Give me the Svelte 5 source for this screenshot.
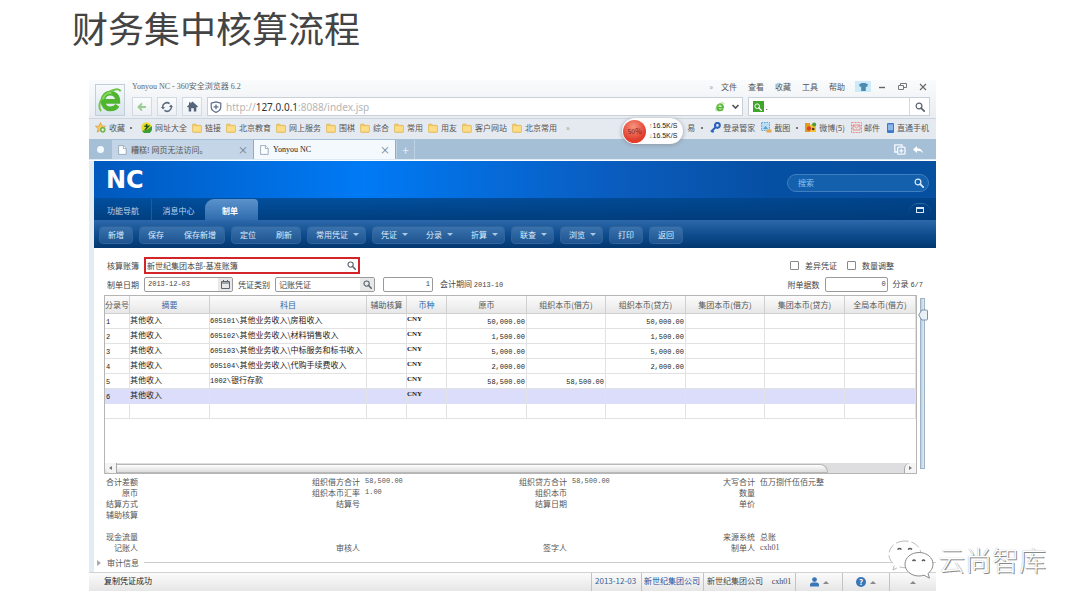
<script>
  const menus = ['文件', '查看', '收藏', '工具', '帮助'];
  const folders = ['链接', '北京教育', '网上服务', '围棋', '综合', '常用', '用友', '客户网站', '北京常用'];
  const toolGroups = [
    [{ t: '新增' }],
    [{ t: '保存' }, { t: '保存新增' }],
    [{ t: '定位' }, { t: '刷新' }],
    [{ t: '常用凭证', d: true }],
    [{ t: '凭证', d: true }, { t: '分录', d: true }, { t: '折算', d: true }],
    [{ t: '联查', d: true }],
    [{ t: '浏览', d: true }],
    [{ t: '打印' }],
    [{ t: '返回' }]
  ];
  const columns = [
    { t: '分录号', w: 25 },
    { t: '摘要', w: 80, key: true },
    { t: '科目', w: 157, key: true },
    { t: '辅助核算', w: 40 },
    { t: '币种', w: 40, key: true },
    { t: '原币', w: 80 },
    { t: '组织本币(借方)', w: 79 },
    { t: '组织本币(贷方)', w: 80 },
    { t: '集团本币(借方)', w: 79 },
    { t: '集团本币(贷方)', w: 80 },
    { t: '全局本币(借方)', w: 71 }
  ];
  const rows = [
    { code: '605101\\', name: '其他业务收入\\房租收入', amount: '50,000.00', debit: '', credit: '50,000.00' },
    { code: '605102\\', name: '其他业务收入\\材料销售收入', amount: '1,500.00', debit: '', credit: '1,500.00' },
    { code: '605103\\', name: '其他业务收入\\中标服务和标书收入', amount: '5,000.00', debit: '', credit: '5,000.00' },
    { code: '605104\\', name: '其他业务收入\\代购手续费收入', amount: '2,000.00', debit: '', credit: '2,000.00' },
    { code: '1002\\', name: '银行存款', amount: '58,500.00', debit: '58,500.00', credit: '' },
    { code: '', name: '', amount: '', debit: '', credit: '', selected: true }
  ];
  const summary = [
    ['合计差额', '', '组织借方合计', '58,500.00', '组织贷方合计', '58,500.00', '大写合计', '伍万捌仟伍佰元整'],
    ['原币', '', '组织本币汇率', '1.00', '组织本币', '', '数量', ''],
    ['结算方式', '', '结算号', '', '结算日期', '', '单价', ''],
    ['辅助核算', '', '', '', '', '', '', ''],
    ['', '', '', '', '', '', '', ''],
    ['现金流量', '', '', '', '', '', '来源系统', '总账'],
    ['记账人', '', '审核人', '', '签字人', '', '制单人', 'cxh01']
  ];
  const isNumber = (v) => /^[\d,.]+$/.test(v);
</script>

{#snippet magnifier(color, size)}
  <svg width={size} height={size} viewBox="0 0 10 10" fill="none" stroke={color} aria-hidden="true">
    <circle cx="4" cy="4" r="2.9" stroke-width="1.2" />
    <path d="M6.2 6.2 9.2 9.2" stroke-width="1.7" stroke-linecap="round" />
  </svg>
{/snippet}

{#snippet page()}
  <svg width="9" height="10" viewBox="0 0 9 10" fill="#fdfeff" stroke="#8c9cae" stroke-width=".8" aria-hidden="true">
    <path d="M.6.6h5l2.6 2.8v6H.6z" /><path d="M5.4.8v2.8h2.7" />
  </svg>
{/snippet}

{#snippet folder()}
  <svg width="10" height="10" viewBox="0 0 10 10" aria-hidden="true">
    <path d="M.5 2q0-1 1-1h2.2l1 1.3h3.8q1 0 1 1V8.4q0 1-1 1h-7q-1 0-1-1z" fill="#f2c862" stroke="#dfb150" stroke-width=".6" />
    <path d="M1.1 3.2h7.8v5.4H1.1z" fill="#fbdc87" />
  </svg>
{/snippet}

{#snippet browserMark(size)}
  <svg width={size} height={size} viewBox="0 0 28 28" fill="none" aria-hidden="true">
    <path d="M7 15.5H22.5C22.5 9.7 18.8 6.6 14.3 6.6 9.7 6.6 6.4 10.3 6.4 15.2c0 5 3.4 8.4 8.2 8.4 3.4 0 5.8-1.4 7.4-3.8" stroke="#4fb52f" stroke-width="5" />
    <path d="M4.500 26C0 21 4 9 15 4.2 20 2 24 1.6 25.500 4.6" stroke="#6cc442" stroke-width="2" />
    <path d="M6.6 13.4C7.3 8.8 11 6 15.6 6.6" stroke="#86d95b" stroke-width="2" />
  </svg>
{/snippet}

<main>
  <h1>财务集中核算流程</h1>

  <div class="window">
    <header class="chrome">
      <div class="brand">{@render browserMark(26)}</div>
      <div class="chrome-main">
        <div class="titlebar">
          <span class="win-title">Yonyou NC - 360安全浏览器 6.2</span>
          <nav class="menus">
            <span class="faint">»</span>
            {#each menus as m}<button>{m}</button>{/each}
          </nav>
          <div class="win-buttons">
            <button class="skin" aria-label="皮肤">
              <svg width="9" height="8" viewBox="0 0 9 8"><path d="M0 1.5 2.8 0h3.4L9 1.5 8 4 6.8 3.4V8H2.2V3.4L1 4z" fill="#4b8bb0" /></svg>
            </button>
            <button aria-label="最小化"><svg width="8" height="8" viewBox="0 0 8 8"><path d="M1 4.5h6" stroke="#666" stroke-width="1.4" /></svg></button>
            <button aria-label="还原"><svg width="9" height="8" viewBox="0 0 9 8" fill="none" stroke="#777"><path d="M.5 2.5h5v4h-5zM2.5 2.5v-2h6v4h-3" /></svg></button>
            <button aria-label="关闭"><svg width="8" height="8" viewBox="0 0 8 8"><path d="m1 1 6 6M7 1 1 7" stroke="#666" stroke-width="1.1" /></svg></button>
          </div>
        </div>

        <div class="address-row">
          <button class="nav-btn" aria-label="后退">
            <svg width="10" height="10" viewBox="0 0 10 10" fill="none" stroke="#9bcb94" stroke-width="1.8"><path d="M9 5H1.8M5 1.5 1.5 5 5 8.5" /></svg>
          </button>
          <button class="nav-btn" aria-label="刷新">
            <svg width="12" height="12" viewBox="0 0 12 12" fill="none" stroke="#5c6a7e" stroke-width="1.5"><path d="M1.8 7A4.3 4.3 0 0 1 8.6 2.6M10.2 5a4.3 4.3 0 0 1-6.8 4.4" /><path d="M0 6h4L2 8.6zM8 6l2-2.6L12 6z" fill="#5c6a7e" stroke="none" /></svg>
          </button>
          <button class="nav-btn" aria-label="主页">
            <svg width="11" height="11" viewBox="0 0 11 11" fill="#56647a"><path d="M5.5.6 11 5.6 10 6.6 9.3 6v4.6H6.8V7.3H4.2v3.3H1.7V6l-.7.6-1-1L2 3.8V1.2h1.5v1.2z" /></svg>
          </button>
          <div class="address">
            <svg width="12" height="12" viewBox="0 0 12 12" fill="none" stroke="#5a6a86" stroke-width="1.2" aria-hidden="true"><path d="M6 .8 10.8 2.2v3.6C10.8 8.6 8.8 10.4 6 11.4 3.2 10.4 1.2 8.6 1.2 5.8V2.2zM6 3.4v4.8M3.6 5.8h4.8" /></svg>
            <span class="url">http://<b>127.0.0.1</b>:8088/index.jsp</span>
            {@render browserMark(10)}
            <svg class="caret" width="9" height="9" viewBox="0 0 9 9" fill="none" stroke="#555" stroke-width="1.7" aria-hidden="true"><path d="M1.5 3 4.5 6 7.5 3" /></svg>
          </div>
          <label class="web-search">
            <span class="engine">{@render magnifier('#ffffff', 8)}</span>
            <input aria-label="网页搜索" value="." />
            <button aria-label="搜索">{@render magnifier('#5b6470', 10)}</button>
          </label>
        </div>
      </div>
    </header>

    <nav class="bookmarks">
      <a href="#fav">
        <svg width="11" height="11" viewBox="0 0 11 11"><path d="M5.5.6 7 4l3.6.2L8 6.6l.8 3.6-3.3-1.9-3.3 1.9L3 6.6.4 4.2 4 4z" fill="#f7c861" stroke="#d99a35" stroke-width=".7" /><circle cx="7.8" cy="7.8" r="2.8" fill="#67b548" /><path d="M6.4 7.8h2.8M7.8 6.4v2.8" stroke="#fff" /></svg>收藏
      </a>
      <i class="dot"></i>
      <a class="sites" href="#sites">
        <svg width="11" height="11" viewBox="0 0 11 11"><circle cx="5.5" cy="5.5" r="5.2" fill="#e9dc28" /><path d="M1 8.8A5.2 5.2 0 0 0 10.6 4L6 8z" fill="#3a9d35" /><path d="M3.4 4.2h4.2L3.8 8M5.6 2v5.6" stroke="#255a24" stroke-width="1.4" fill="none" /></svg>网址大全
      </a>
      {#each folders as f}<a href="#folder">{@render folder()}{f}</a>{/each}
      <span class="faint more">»</span>
      <div class="plugins">
        <a href="#trade">易</a>
        <i class="dot"></i>
        <a href="#login">
          <svg width="11" height="11" viewBox="0 0 11 11"><circle cx="7.4" cy="3.4" r="2.4" fill="none" stroke="#2d62c0" stroke-width="2.2" /><path d="M5.8 5 1 9.8M2 8.6l1.6 1.6" stroke="#2d62c0" stroke-width="2" /></svg>登录管家
        </a>
        <a href="#shot">
          <svg width="11" height="11" viewBox="0 0 11 11"><rect x=".5" y=".5" width="8" height="8" fill="#b8dcf3" stroke="#5ea5d4" stroke-dasharray="1.5 1" /><path d="M2 7 4.5 4 7 7z" fill="#4f9fce" /><path d="M5.5 7.5h5v3h-5z" fill="#e8a751" /></svg>截图
        </a>
        <i class="dot"></i>
        <a href="#weibo">
          <svg width="12" height="11" viewBox="0 0 12 11"><path d="M0 1h5v9H0z" fill="#e59a26" /><path d="M5 3q3-3 6 0v7H5z" fill="#f2c437" /><circle cx="4" cy="6.5" r="2.2" fill="#d8442e" /><circle cx="9.2" cy="2.4" r="2" fill="#4f9a3c" /><circle cx="8.2" cy="7" r="1.3" fill="#4d3516" /></svg>微博(5)
        </a>
        <a href="#mail">
          <svg width="11" height="11" viewBox="0 0 11 11" fill="none" stroke="#e48c83"><rect x=".5" y=".5" width="10" height="10" stroke-dasharray="2 1" /><path d="M2 3h7v5H2zM2 3l3.5 3L9 3" /></svg>邮件
        </a>
        <a href="#phone">
          <svg width="9" height="10" viewBox="0 0 9 10"><rect x="1" width="7" height="10" rx="1" fill="#3f78c4" /><path d="M2 1.4h5v5.8H2z" fill="#8bb8ea" /></svg>直通手机
        </a>
      </div>
      <div class="gauge">
        <span class="ball">50%</span>
        <span class="rates"><span><em class="up">↑</em>16.5K/S</span><span><em class="down">↓</em>16.5K/S</span></span>
      </div>
    </nav>

    <div class="tabs">
      <span class="tab-home"><i></i></span>
      <div class="tab">{@render page()}<span>糟糕! 网页无法访问。</span><button aria-label="关闭标签">×</button></div>
      <div class="tab active">{@render page()}<span class="serif">Yonyou NC</span><button aria-label="关闭标签">×</button></div>
      <button class="new-tab" aria-label="新标签">+</button>
      <div class="tab-tools">
        <svg width="12" height="11" viewBox="0 0 12 11" fill="none" stroke="#f6faff" stroke-width="1.3" aria-hidden="true"><path d="M3 8H.8V.8H8V3" /><rect x="3.6" y="3.2" width="7.4" height="7" rx="1" /><path d="M7.3 4.8v4M5.3 6.8h4" /></svg>
        <svg width="10" height="8" viewBox="0 0 10 8" fill="#fff" aria-hidden="true"><path d="M0 3.5 4 0v2.2c3.4 0 5.4 1.8 6 5C8.600 5.500 7 4.800 4 4.800V7z" /></svg>
      </div>
    </div>

    <div class="app">
      <div class="banner">
        <span class="logo">NC</span>
        <label class="app-search">
          <input aria-label="搜索" placeholder="搜索" />
          {@render magnifier('#dcecff', 10)}
        </label>
      </div>
      <nav class="app-tabs">
        <a href="#guide">功能导航</a>
        <a href="#message" class="split">消息中心</a>
        <a href="#voucher" class="current">制单</a>
        <button class="expand" aria-label="展开"><i></i></button>
      </nav>
      <div class="toolbar">
        {#each toolGroups as g}
          <div class="group">
            {#each g as b}<button class:menu={b.d}>{b.t}{#if b.d}<i class="drop"></i>{/if}</button>{/each}
          </div>
        {/each}
      </div>

      <section class="content">
        <div class="form">
          <div class="line">
            <label for="book">核算账簿</label>
            <div class="field book"><input id="book" value="新世纪集团本部-基准账簿" />{@render magnifier('#59636f', 9)}</div>
            <div class="right">
              <label class="check"><input type="checkbox" />差异凭证</label>
              <label class="check"><input type="checkbox" />数量调整</label>
            </div>
          </div>
          <div class="line">
            <label for="date">制单日期</label>
            <div class="field date">
              <input id="date" class="num" value="2013-12-03" />
              <span class="picker"><svg width="9" height="9" viewBox="0 0 9 9" fill="none" stroke="#5d6670" aria-hidden="true"><path d="M.5 1.5h8v7h-8zM.5 3h8M2.500 0v2M6.500 0v2" /></svg></span>
            </div>
            <label for="kind">凭证类别</label>
            <div class="field kind"><input id="kind" value="记账凭证" /><span class="picker">{@render magnifier('#59636f', 9)}</span></div>
            <div class="field seq"><input class="num end" aria-label="凭证号" value="1" /></div>
            <span class="period">会计期间 <span class="num">2013-10</span></span>
            <div class="right attach">
              <label for="attach">附单据数</label>
              <div class="field count"><input id="attach" class="num end" value="0" /></div>
              <span>分录 <span class="num">6/7</span></span>
            </div>
          </div>
        </div>

        <div class="sheet">
          <div class="frame">
            <table>
              <colgroup>{#each columns as c}<col style="width: {c.w}px" />{/each}</colgroup>
              <thead>
                <tr>{#each columns as c}<th class:key={c.key}>{c.t}</th>{/each}</tr>
              </thead>
              <tbody>
                {#each rows as r, i}
                  <tr class:selected={r.selected}>
                    <td class="num low">{i + 1}</td>
                    <td>其他收入</td>
                    <td><span class="num">{r.code}</span>{r.name}</td>
                    <td></td>
                    <td class="currency">CNY</td>
                    <td class="num low end">{r.amount}</td>
                    <td class="num low end">{r.debit}</td>
                    <td class="num low end">{r.credit}</td>
                    <td></td><td></td><td></td>
                  </tr>
                {/each}
                <tr>{#each columns as _}<td></td>{/each}</tr>
              </tbody>
            </table>
            <div class="hscroll"><span class="arrow left"></span><span class="bar"></span><span class="track"></span><span class="arrow"></span></div>
          </div>
          <div class="vscroll">
            <svg width="10" height="12" viewBox="0 0 10 12" aria-hidden="true"><path d="M.7 6 3.800 1h4.700q1 0 1 1v8q0 1-1 1H3.800z" fill="#e8eff5" stroke="#7d93a8" /></svg>
          </div>
        </div>

        <div class="summary">
          {#each summary as line}
            {#each line as cell, i}
              <span class:value={i % 2 === 1} class:num={isNumber(cell)} class:serif={cell === 'cxh01'}>{cell}</span>
            {/each}
          {/each}
        </div>

        <div class="audit"><i></i><span>审计信息</span></div>
      </section>
    </div>

    <footer>
      <span class="message">复制凭证成功</span>
      <span class="cell day">2013-12-03</span>
      <span class="cell org">新世纪集团公司</span>
      <span class="cell user">新世纪集团公司 <span class="serif">cxh01</span></span>
      <button class="cell icon" aria-label="用户">
        <svg width="9" height="10" viewBox="0 0 9 10" fill="#3a75b8"><circle cx="4.500" cy="2.600" r="2.400" /><path d="M0 9.500V8q0-2.500 2.500-2.500h4Q9 5.500 9 8v1.500z" /></svg><i class="rise"></i>
      </button>
      <button class="cell icon" aria-label="帮助"><span class="help">?</span><i class="rise"></i></button>
      <button class="cell icon" aria-label="展开状态栏"><i class="rise"></i></button>
    </footer>
  </div>

  <div class="watermark">
    <svg width="46" height="40" viewBox="0 0 46 40" fill="#fff" stroke="#8b8b8b" stroke-width="1" aria-hidden="true">
      <path d="M17 1C8 1 1 7 1 14.500c0 4 2 7.500 5.500 10L5 30l6-3.200c2 .6 4 .9 6 .9 9 0 16-5.700 16-13.200S26 1 17 1z" stroke="#b9b9b9" stroke-dasharray="9 3" />
      <path d="M31 12.500c-8 0-14 5.200-14 11.700S23 36 31 36c1.700 0 3.400-.3 5-.8l5.500 3-1.500-4.700c3-2.200 5-5.500 5-9.300 0-6.500-6-11.700-14-11.700z" />
      <path d="M9.500 9.500q2-2 4 0M20 9.500q2-2 4 0M24.500 21q1.500-2 3 0M34 21q1.500-2 3 0" fill="none" stroke="#555" stroke-width="1.300" />
    </svg>
    <span>云尚智库</span>
  </div>
</main>

<style>
  :global(body) { margin: 0; background: #fff; }
  main { position: relative; font: 8px/11px "Noto Sans CJK SC", sans-serif; color: #333; padding: 0 144px 16px 89px; white-space: nowrap; }
  main, main * { box-sizing: border-box; }
  h1 { margin: 0 0 26px -17px; font-size: 36px; line-height: 54px; font-weight: 400; color: #444; }
  button, input { font: inherit; color: inherit; border: 0; background: none; padding: 0; margin: 0; min-width: 0; outline: 0; }
  a { color: inherit; text-decoration: none; }
  svg { display: block; flex: none; }
  .num { font-family: "Liberation Mono", monospace; font-size: 7px; }
  .serif { font-family: "Liberation Serif", serif; }
  .faint { color: #999; }
  .window { background: #fff; }

  .chrome { display: flex; gap: 7px; padding: 0 6px 2px; background: linear-gradient(#fafbfc, #e9edf2); }
  .brand { width: 30px; height: 32px; margin-top: 4px; border: 1px solid #c3ced9; background: linear-gradient(#f7fafc, #d9e4ee); display: grid; place-items: center; }
  .chrome-main { flex: 1; min-width: 0; }
  .titlebar { display: flex; align-items: center; height: 16px; margin-bottom: 1px; padding-bottom: 3px; }
  .win-title { flex: 1; color: #666; font-family: "Liberation Serif", "Noto Sans CJK SC", serif; }
  .menus { display: flex; gap: 11px; color: #555; }
  .menus .faint { margin-right: -3px; }
  .win-buttons { display: flex; align-items: center; gap: 12px; margin-left: 10px; padding-right: 3px; }
  .win-buttons button { height: 11px; display: grid; place-items: center; }
  .win-buttons .skin { width: 16px; background: #cdeaf8; margin-right: -5px; }
  .address-row { display: flex; height: 19px; align-items: stretch; gap: 5px; }
  .nav-btn { width: 20px; border: 1px solid #d3dae2; background: linear-gradient(#fbfcfd, #edf1f5); display: grid; place-items: center; }
  .address { flex: 540; display: flex; align-items: center; gap: 4px; padding: 0 2px; border: 1px solid #c9d0d8; background: #fff; }
  .url { flex: 1; font: 10px/12px "Noto Sans", sans-serif; color: #b5b5b5; }
  .url b { font-weight: 400; color: #333; }
  .caret { margin-left: 2px; }
  .web-search { flex: 180; display: flex; align-items: center; gap: 2px; padding-left: 4px; border: 1px solid #c9d0d8; background: #fff; }
  .web-search input { flex: 1; width: 0; }
  .engine { width: 11px; height: 11px; background: #41a52d; display: grid; place-items: center; }
  .web-search button { width: 20px; align-self: stretch; border-left: 1px solid #d5dae0; display: grid; place-items: center; }

  .bookmarks { position: relative; display: flex; align-items: center; height: 21px; gap: 5px; padding: 0 7px 3px 6px; border-top: 1px solid #cdd5de; background: #e5eaf1; color: #555; }
  .bookmarks a { display: flex; align-items: center; gap: 3px; }
  .dot { width: 2px; height: 2px; background: #777; margin-right: 1px; }
  .bookmarks .sites { margin-left: 3px; }
  .more { margin-left: 4px; }
  .plugins { display: flex; align-items: center; gap: 6px; margin-left: auto; }
  .plugins a { gap: 2px; }
  .gauge { position: absolute; left: 533px; top: -1px; height: 26px; display: flex; align-items: center; gap: 3px; width: 61px; border-radius: 13px; background: #fdfdfd; box-shadow: 0 1px 4px #8f98a3; z-index: 1; }
  .ball { width: 23px; height: 23px; margin-left: 1px; border-radius: 50%; background: radial-gradient(circle at 45% 30%, #f59580, #e23c2b 65%); color: #7d1d15; font-size: 7px; line-height: 22px; text-align: center; }
  .rates { display: flex; flex-direction: column; font: 7px/10px "Liberation Sans", sans-serif; color: #222; }
  .rates em { font-style: normal; }
  .up { color: #e06a1e; }
  .down { color: #2e9a39; }

  .tabs { display: flex; align-items: stretch; height: 21px; padding-top: 1px; border-bottom: 1px solid #dbeaf5; background: #a5bfd6; }
  .tab-home { width: 23px; display: grid; place-items: center; }
  .tab-home i { width: 7px; height: 7px; border-radius: 50%; background: #f4f9fd; }
  .tab { width: 142px; display: flex; align-items: center; gap: 4px; padding: 0 5px 0 6px; background: #c3d5e6; border-right: 1px solid #91abc4; color: #555; }
  .tab span { flex: 1; }
  .tab button { color: #67788a; font-size: 10px; line-height: 12px; }
  .tab.active { background: #f3f9fd; color: #222; }
  .new-tab { width: 19px; border: 1px solid #bed1e2; border-width: 0 1px; color: #e6f0f8; font-size: 12px; }
  .tab-tools { display: flex; align-items: center; gap: 7px; margin-left: auto; padding-right: 13px; }

  .app { margin-top: 1px; border-left: 5px solid #e3ecf3; }
  .banner { display: flex; align-items: center; justify-content: space-between; height: 37px; padding: 0 7px 0 12px; background: linear-gradient(90deg, #0059bd, #007af5 32%, #0a5cbe 62%, #0650a4 80%, #074f9f); }
  .logo { font: bold 24px/24px "DejaVu Sans", sans-serif; color: #fff; }
  .app-search { width: 142px; height: 18px; margin-top: 6px; padding: 0 4px 0 10px; display: flex; align-items: center; border: 1px solid #3f7fc0; border-radius: 9px; background: #1460ad; color: #8fc3ef; }
  .app-search input { flex: 1; width: 0; }
  .app-search input::placeholder { color: #8fc3ef; }
  .app-tabs { display: flex; align-items: stretch; height: 22px; padding: 1px 5px 0 1px; background: linear-gradient(90deg, transparent 30%, #003a7888), linear-gradient(#014f9e, #013f7f); color: #b8d7f3; line-height: 23px; }
  .app-tabs a { width: 56px; text-align: center; }
  .app-tabs .split { border-left: 1px solid #1d5c9f; width: 54px; }
  .app-tabs .current { width: 53px; padding-right: 3px; border-radius: 9px 4px 0 0; background: linear-gradient(#5b92cb, #2f6cae); color: #fff; font-weight: 700; }
  .expand { width: 22px; height: 13px; align-self: center; margin-left: auto; border-top: 1px solid #2b6aa9; border-radius: 9px 9px 0 0; display: grid; place-items: center; }
  .expand i { width: 8px; height: 6px; border: 1px solid #d8ebfb; border-top-width: 2px; }
  .toolbar { display: flex; align-items: center; gap: 6px; height: 28px; padding: 1px 5px 0; background: linear-gradient(#2c68aa, #0d4b8d 55%, #023770); color: #dcecfb; }
  .group { display: flex; height: 18px; border: 1px solid #2e639b; border-radius: 4px; background: linear-gradient(#3a72ae, #1e5590); }
  .group button { display: flex; align-items: center; gap: 5px; padding: 0 8px; }
  .group button + button { padding-left: 12px; }
  .group .menu { padding-right: 6px; }
  .drop { border: 3px solid transparent; border-top-color: #a8c8e6; border-bottom: 0; }

  .content { padding-top: 9px; background: #fff; }
  .form { display: flex; flex-direction: column; gap: 3px; padding: 0 13px 3px; color: #444; }
  .line { display: flex; align-items: center; gap: 5px; height: 16px; }
  .field { display: flex; align-items: center; height: 15px; padding-left: 3px; border: 1px solid #9a9a9a; border-radius: 2px; background: #fff; overflow: hidden; }
  .field input { flex: 1; width: 0; line-height: 11px; }
  .book { width: 216px; height: 17px; padding: 0 2px 0 1px; border: 2px solid #d3242a; border-radius: 0; }
  .date { width: 89px; }
  .kind { width: 100px; }
  .seq { width: 50px; margin: 0 2px 0 3px; padding-right: 2px; }
  .count { width: 63px; padding-right: 1px; }
  .end { text-align: right; }
  .picker { align-self: stretch; width: 14px; display: grid; place-items: center; background: #e8e8e8; }
  .right { display: flex; align-items: center; gap: 10px; margin-left: auto; padding-right: 29px; }
  .attach { gap: 5px; padding-right: 0; }
  .check { display: flex; align-items: center; gap: 6px; }
  .check input { appearance: none; width: 9px; height: 9px; border: 1px solid #888; border-radius: 1px; background: #fff; }

  .sheet { display: flex; gap: 3px; padding: 0 9px 0 10px; }
  .frame { flex: 1; min-width: 0; min-height: 179px; display: flex; flex-direction: column; justify-content: space-between; border: 1px solid #b5b5b5; }
  table { width: 100%; table-layout: fixed; border-collapse: separate; border-spacing: 0; }
  th, td { padding: 0; overflow: hidden; border-right: 1px solid #e2e2e2; border-bottom: 1px solid #e2e2e2; text-align: left; }
  th { height: 18px; font-weight: 400; text-align: center; color: #555; background: linear-gradient(#fcfcfc, #e7e7e7); border-color: #d0d0d0; }
  th.key { color: #2f6aa8; }
  td { height: 15px; line-height: 11px; padding-bottom: 3px; color: #222; }
  td .num { line-height: 7px; }
  td.low { padding: 3px 1px 0; }
  td.end { text-align: right; }
  .currency { font-family: "Liberation Serif", serif; font-size: 7px; font-weight: 700; }
  .selected td { background: #dcdcfb; border-bottom-color: #dcdcfb; }
  .hscroll { height: 10px; display: flex; align-items: center; background: #dedee0; }
  .arrow { width: 12px; height: 10px; border-left: 1px solid #aaa; border-radius: 6px 0 0 0; background: #f4f4f4; display: grid; place-items: center; }
  .arrow::after { content: ""; border: 2px solid transparent; border-left: 3px solid #777; border-right: 0; }
  .arrow.left { border: 0; border-right: 1px solid #aaa; border-radius: 0 0 0 6px; }
  .arrow.left::after { border: 2px solid transparent; border-right: 3px solid #777; border-left: 0; }
  .bar { flex: 712; height: 9px; border: 1px solid #b8b8b8; border-width: 1px 1px 1px 0; border-radius: 0 8px 0 0; background: linear-gradient(#fff, #dcdcdc); }
  .track { flex: 76; }
  .vscroll { width: 5px; margin: 3px 2px 5px 0; border: 1px solid #9eb3c6; background: linear-gradient(90deg, #b9cddd, #e1ecf4); }
  .vscroll svg { margin: 10px 0 0 -3px; }

  .summary { display: grid; grid-template-columns: 44px 174fr 48px 159fr 48px 140fr 48px 181fr; grid-auto-rows: 11px; padding-top: 2px; height: 80px; color: #555; text-align: right; }
  .summary .value { padding-left: 5px; text-align: left; }
  .audit { display: flex; align-items: center; gap: 5px; height: 18px; padding: 0 0 1px 3px; color: #555; }
  .audit i { border: 3px solid transparent; border-left: 4px solid #aaa; border-right: 0; margin-right: 1px; }
  .audit::after { content: ""; flex: 1; height: 1px; background: #ccc; }

  footer { display: flex; align-items: stretch; height: 19px; line-height: 16px; border-top: 1px solid #d2d2d2; background: linear-gradient(#fbfbfb, #e6e6e6); }
  .message { flex: 1; padding-left: 15px; color: #222; }
  .cell { border-left: 1px solid #c4c4c4; padding: 0 3px; color: #444; }
  .day { width: 50px; color: #34649b; }
  .org { width: 62px; padding: 0 2px; color: #1f4f9c; }
  .user { width: 92px; }
  .user .serif { margin-left: 7px; }
  .icon { width: 47px; display: flex; align-items: center; justify-content: center; gap: 4px; }
  .rise { border: 3px solid transparent; border-bottom-color: #888; border-top: 0; }
  .help { width: 10px; height: 10px; border-radius: 50%; background: #3a75b8; color: #fff; font-weight: 700; line-height: 10px; }

  .watermark { position: absolute; right: 34px; bottom: 27px; display: flex; align-items: center; gap: 4px; font-size: 27px; line-height: 40px; font-weight: 300; color: #fff; text-shadow: 1px 1px 0 #888, 0 0 1px #999; }
</style>
